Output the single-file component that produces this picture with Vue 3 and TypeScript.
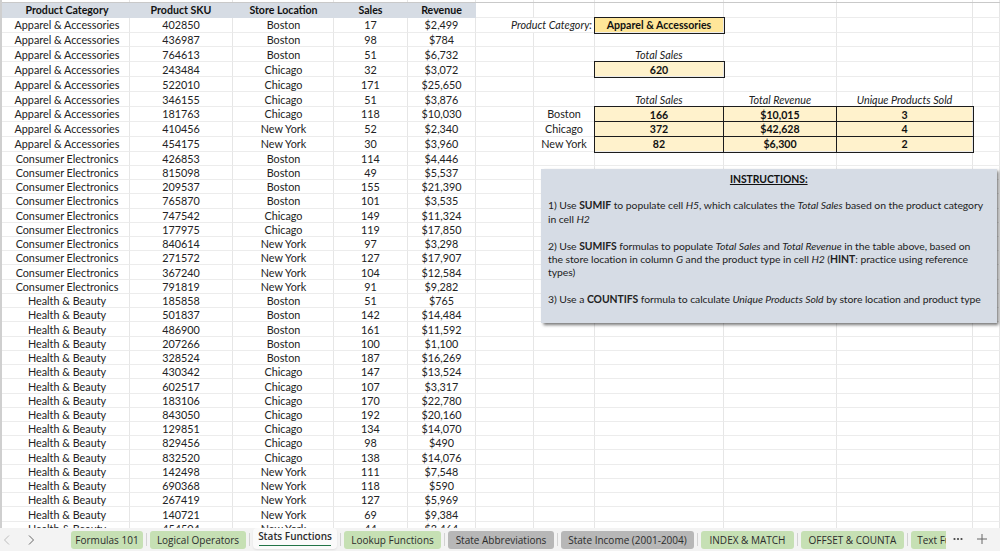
<script setup lang="ts">
type D = [string, number, string, number, string]
const A = 'Apparel & Accessories', C = 'Consumer Electronics', H = 'Health & Beauty'
const B = 'Boston', I = 'Chicago', N = 'New York'
const data: D[] = [
  [A,402850,B,17,'$2,499'],[A,436987,B,98,'$784'],[A,764613,B,51,'$6,732'],[A,243484,I,32,'$3,072'],
  [A,522010,I,171,'$25,650'],[A,346155,I,51,'$3,876'],[A,181763,I,118,'$10,030'],[A,410456,N,52,'$2,340'],
  [A,454175,N,30,'$3,960'],
  [C,426853,B,114,'$4,446'],[C,815098,B,49,'$5,537'],[C,209537,B,155,'$21,390'],[C,765870,B,101,'$3,535'],
  [C,747542,I,149,'$11,324'],[C,177975,I,119,'$17,850'],[C,840614,N,97,'$3,298'],[C,271572,N,127,'$17,907'],
  [C,367240,N,104,'$12,584'],[C,791819,N,91,'$9,282'],
  [H,185858,B,51,'$765'],[H,501837,B,142,'$14,484'],[H,486900,B,161,'$11,592'],[H,207266,B,100,'$1,100'],
  [H,328524,B,187,'$16,269'],[H,430342,I,147,'$13,524'],[H,602517,I,107,'$3,317'],[H,183106,I,170,'$22,780'],
  [H,843050,I,192,'$20,160'],[H,129851,I,134,'$14,070'],[H,829456,I,98,'$490'],[H,832520,I,138,'$14,076'],
  [H,142498,N,111,'$7,548'],[H,690368,N,118,'$590'],[H,267419,N,127,'$5,969'],[H,140721,N,69,'$9,384'],
  [H,454504,N,44,'$3,464'],
]
const side: Record<number, { g?: string; h?: string; i?: string; j?: string; kind?: string }> = {
  3: { h: 'Total Sales', kind: 'label' },
  4: { h: '620', kind: 'single' },
  6: { h: 'Total Sales', i: 'Total Revenue', j: 'Unique Products Sold', kind: 'label' },
  7: { g: 'Boston', h: '166', i: '$10,015', j: '3', kind: 'box' },
  8: { g: 'Chicago', h: '372', i: '$42,628', j: '4', kind: 'box' },
  9: { g: 'New York', h: '82', i: '$6,300', j: '2', kind: 'box' },
}
const rows = data.map((d, i) => ({ d, n: i + 1, s: side[i + 1] ?? {} }))
const tabs = [
  { t: 'Formulas 101', c: 'green', w: 72 }, { t: 'Logical Operators', c: 'green', w: 96 },
  { t: 'Stats Functions', c: 'active', w: 84 }, { t: 'Lookup Functions', c: 'green', w: 97 },
  { t: 'State Abbreviations', c: 'gray', w: 106 }, { t: 'State Income (2001-2004)', c: 'gray', w: 133 },
  { t: 'INDEX & MATCH', c: 'green', w: 93 }, { t: 'OFFSET & COUNTA', c: 'green', w: 103 },
  { t: 'Text Functions', c: 'green', w: 80 },
]
</script>

<template>
  <div class="sheet">
    <div class="grid">
      <div class="row strip">
        <div v-for="n in 11" :key="n" class="c"></div>
      </div>
      <div class="row head">
        <div class="c hd first">Product Category</div>
        <div class="c hd">Product SKU</div>
        <div class="c hd third">Store Location</div>
        <div class="c hd">Sales</div>
        <div class="c hd">Revenue</div>
        <div class="c"></div><div class="c"></div><div class="c"></div><div class="c"></div><div class="c"></div><div class="c"></div>
      </div>
      <div v-for="r in rows" :key="r.d[1]" class="row" :class="{ tall: r.n <= 9 }">
        <div class="c first">{{ r.d[0] }}</div>
        <div class="c">{{ r.d[1] }}</div>
        <div class="c third">{{ r.d[2] }}</div>
        <div class="c">{{ r.d[3] }}</div>
        <div class="c">{{ r.d[4] }}</div>
        <template v-if="r.n === 1">
          <div class="c span2 prompt">Product Category:</div>
          <div class="c chosen">Apparel &amp; Accessories</div>
        </template>
        <template v-else>
          <div class="c"></div>
          <div class="c">{{ r.s.g }}</div>
          <div class="c" :class="r.s.kind">{{ r.s.h }}</div>
        </template>
        <div class="c" :class="r.s.kind === 'single' ? '' : r.s.kind">{{ r.s.i }}</div>
        <div class="c" :class="r.s.kind === 'single' ? '' : r.s.kind">{{ r.s.j }}</div>
        <div class="c"></div>
      </div>
      <div class="note">
        <div class="note-title">INSTRUCTIONS:</div>
        <br />
        <div>1) Use <b>SUMIF</b> to populate cell <i>H5</i>, which calculates the <i>Total Sales</i> based on the product category<br />in cell <i>H2</i></div>
        <br />
        <div>2) Use <b>SUMIFS</b> formulas to populate <i>Total Sales</i> and <i>Total Revenue</i> in the table above, based on<br />the store location in column <i>G</i> and the product type in cell <i>H2</i> (<b>HINT</b>: practice using reference<br />types)</div>
        <br />
        <div>3) Use a <b>COUNTIFS</b> formula to calculate <i>Unique Products Sold</i> by store location and product type</div>
      </div>
    </div>
    <div class="bar">
      <div class="nav">
        <svg width="10" height="12" viewBox="0 0 10 12" class="prev"><path d="M7 1.5 2.5 6 7 10.5" /></svg>
        <svg width="10" height="12" viewBox="0 0 10 12" class="next"><path d="M3 1.5 7.5 6 3 10.5" /></svg>
      </div>
      <div class="tabs">
        <template v-for="(tab, i) in tabs" :key="tab.t">
          <span v-if="i" class="sep"></span>
          <div class="tab" :class="tab.c" :style="{ flexBasis: tab.w + 'px' }">{{ tab.t }}</div>
        </template>
      </div>
      <svg class="more" width="10" height="4" viewBox="0 0 10 4"><circle cx="1.5" cy="2" r="1.1" /><circle cx="5" cy="2" r="1.1" /><circle cx="8.5" cy="2" r="1.1" /></svg>
      <svg class="plus" width="12" height="12" viewBox="0 0 12 12"><path d="M6 1v10M1 6h10" /></svg>
    </div>
  </div>
</template>

<style>
html, body { margin: 0; padding: 0; background: #fff; overflow: hidden; }
</style>

<style scoped>
.sheet {
  width: 1000px;
  height: 551px;
  display: flex;
  flex-direction: column;
  overflow: hidden;
  font-family: Lato, "Liberation Sans", sans-serif;
  font-size: 10.8px;
  color: #222;
}
.grid {
  position: relative;
  height: 528px;
  overflow: hidden;
  flex: none;
  border-left: 2px solid #cfcfcf;
  box-sizing: border-box;
}
.row {
  display: grid;
  grid-template-columns: 128px 103px 101px 74px 68px 58px 61px 129px 113px 136px 27px;
  height: 14.24px;
}
.row.tall { height: 14.89px; }
.row.head { height: 15.2px; }
.row.strip { height: 2.5px; border-bottom: 1px solid #c9c9c9; box-sizing: border-box; }
.c {
  box-sizing: border-box;
  border-right: 1px solid #e6e6e6;
  border-bottom: 1px solid #ececec;
  display: flex;
  align-items: center;
  justify-content: center;
  white-space: nowrap;
  line-height: 1;
  padding-top: 2px;
}
.first { padding-left: 3px; }
.third { padding-left: 1px; }
.strip .c { border-bottom: 0; padding: 0; }
.hd {
  background: #d6dce4;
  font-weight: 700;
  color: #111;
  border-right-color: #d6dce4;
  border-bottom-color: #d6dce4;
  font-size: 10.6px;
  padding-top: 1px;
}
.span2 { grid-column: span 2; }
.prompt {
  justify-content: flex-end;
  font-style: italic;
  padding-right: 2px;
}
.label { font-style: italic; }
.chosen, .single, .box {
  font-weight: 700;
  color: #111;
  font-size: 10.6px;
  outline: 1.8px solid #1c1c1c;
  outline-offset: -0.9px;
  background: #fff2cc;
  position: relative;
  z-index: 1;
}
.chosen { background: #ffe699; }
.note {
  position: absolute;
  left: 539px;
  top: 169px;
  width: 455.5px;
  height: 154px;
  box-sizing: border-box;
  z-index: 3;
  background: #d6dce5;
  box-shadow: 1.5px 2px 3px rgba(0, 0, 0, 0.55);
  padding: 3.5px 0 0 7px;
  font-size: 10.4px;
  letter-spacing: -0.05px;
  line-height: 13.4px;
  white-space: nowrap;
  color: #222;
}
.note-title {
  text-align: center;
  font-weight: 700;
  text-decoration: underline;
  padding-right: 7px;
  color: #111;
}
.bar {
  flex: 1;
  display: flex;
  align-items: center;
  background: #f3f3f3;
  font-family: "Open Sans", "Noto Sans", sans-serif;
  position: relative;
}
.nav {
  width: 71px;
  flex: none;
  display: flex;
  gap: 14px;
  padding-left: 2px;
  box-sizing: border-box;
}
.nav path, .plus path {
  fill: none;
  stroke: #666;
  stroke-width: 1;
}
.nav .prev path { stroke: #bdbdbd; }
.tabs {
  width: 875px;
  flex: none;
  display: flex;
  align-items: center;
  overflow: hidden;
  height: 100%;
}
.sep {
  width: 1px;
  height: 13px;
  margin: 0 3px;
  flex: none;
  background: #d2d2d2;
}
.tab {
  flex: none;
  height: 18px;
  margin-top: 1px;
  border-radius: 3px;
  display: flex;
  align-items: center;
  justify-content: center;
  white-space: nowrap;
  font-size: 10px;
  color: #2c2c2c;
  overflow: hidden;
}
.tab.green { background: #c6e0b4; }
.tab.gray { background: #b7b7b7; }
.tab.active {
  height: 21px;
  margin-top: -2px;
  background: #fafafa;
  border-radius: 4px;
  font-weight: 600;
  position: relative;
  padding-bottom: 5px;
  box-sizing: border-box;
  box-shadow: 0 1px 2px rgba(0, 0, 0, 0.08);
}
.tab.active::after {
  content: "";
  position: absolute;
  left: 6px;
  right: 6px;
  bottom: 3px;
  height: 1.5px;
  background: #217346;
}
.more {
  position: absolute;
  left: 953px;
  top: 9px;
  fill: #444;
}
.plus {
  position: absolute;
  left: 976px;
  top: 5px;
}
</style>
